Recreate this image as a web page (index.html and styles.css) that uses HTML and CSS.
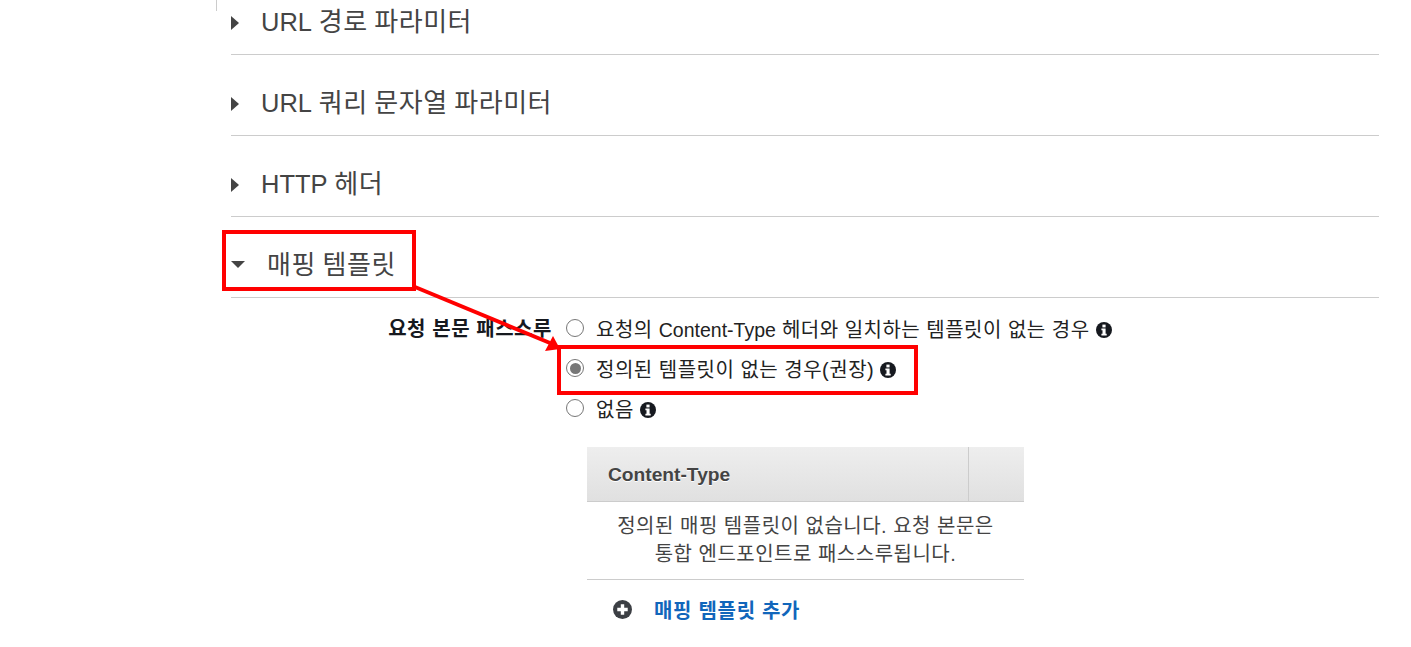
FILE: index.html
```html
<!DOCTYPE html>
<html lang="ko">
<head>
<meta charset="utf-8">
<title>매핑 템플릿</title>
<link rel="stylesheet" href="styles.css">
</head>
<body>
<div class="edge"></div>
<main class="panel">
  <section class="sec first"><span class="tri"></span><h3><span class="lat">URL</span> 경로 파라미터</h3></section>
  <section class="sec"><span class="tri"></span><h3><span class="lat">URL</span> 쿼리 문자열 파라미터</h3></section>
  <section class="sec"><span class="tri"></span><h3><span class="lat">HTTP</span> 헤더</h3></section>
  <section class="sec"><span class="tri down"></span><h3>매핑 템플릿</h3></section>
  <div class="form">
    <div class="label">요청 본문 패스스루</div>
    <div class="opts">
      <div class="opt"><span class="radio"></span><span>요청의 <span class="lat">Content-Type</span> 헤더와 일치하는 템플릿이 없는 경우</span>
        <svg class="info" viewBox="0 0 16 16"><circle cx="8" cy="8" r="8" fill="#16191f"/><rect x="6.4" y="2.6" width="3.2" height="2.8" fill="#fff"/><path d="M5.4 6.5h4.2v5.3h1.1v1.7H5.4v-1.7h1.1V8.2H5.4z" fill="#fff"/></svg></div>
      <div class="opt"><span class="radio on"></span><span>정의된 템플릿이 없는 경우(권장)</span>
        <svg class="info" viewBox="0 0 16 16"><circle cx="8" cy="8" r="8" fill="#16191f"/><rect x="6.4" y="2.6" width="3.2" height="2.8" fill="#fff"/><path d="M5.4 6.5h4.2v5.3h1.1v1.7H5.4v-1.7h1.1V8.2H5.4z" fill="#fff"/></svg></div>
      <div class="opt"><span class="radio"></span><span>없음</span>
        <svg class="info" viewBox="0 0 16 16"><circle cx="8" cy="8" r="8" fill="#16191f"/><rect x="6.4" y="2.6" width="3.2" height="2.8" fill="#fff"/><path d="M5.4 6.5h4.2v5.3h1.1v1.7H5.4v-1.7h1.1V8.2H5.4z" fill="#fff"/></svg></div>
    </div>
  </div>
  <div class="table">
    <div class="thead"><div class="th">Content-Type</div><div class="th2"></div></div>
    <div class="empty">정의된 매핑 템플릿이 없습니다. 요청 본문은<br>통합 엔드포인트로 패스스루됩니다.</div>
    <a class="add" href="#"><svg class="plus" viewBox="0 0 20 20"><circle cx="10" cy="10" r="10" fill="#3c3f44"/><path d="M8.2 4.5h3.6v3.7h3.7v3.6h-3.7v3.7H8.2v-3.7H4.5V8.2h3.7z" fill="#fff"/></svg><span>매핑 템플릿 추가</span></a>
  </div>
</main>
<div class="mark mark1"></div>
<div class="mark mark2"></div>
<svg class="arrow" width="1411" height="647" viewBox="0 0 1411 647"><path d="M415 287 L550 343" stroke="#f00" stroke-width="4" fill="none"/><path d="M560 349 L545 351 L553 336z" fill="#f00"/></svg>
</body>
</html>
```
FILE: styles.css
```css
html, body { margin: 0; padding: 0; background: #fff; }
body {
  height: 647px;
  overflow: hidden;
  position: relative;
  font-family: "Liberation Sans", "Noto Sans CJK KR", sans-serif;
  color: #444;
}
.edge { position: absolute; left: 216px; top: 0; width: 1px; height: 11px; background: #ccc; }
.panel { margin-left: 231px; width: 1148px; }
.lat { letter-spacing: 0; font-size: 97.5%; }
.sec {
  display: flex;
  align-items: center;
  box-sizing: border-box;
  height: 81px;
  padding-top: 16px;
  border-bottom: 1px solid #ccc;
}
.sec.first { height: 55px; padding-top: 0; padding-bottom: 10px; }
.sec h3 { margin: -6px 0 0 22px; font-size: 26px; font-weight: 400; letter-spacing: 0.5px; word-spacing: -1px; color: #444; }
.sec h3 .lat { font-size: 25.5px; }
.tri { width: 0; height: 0; margin-top: 2px; border-style: solid; border-width: 7.5px 0 7.5px 8px; border-color: transparent transparent transparent #444; }
.tri.down { border-width: 7px 7px 0 7px; border-color: #444 transparent transparent transparent; margin-top: -2px; }
.form { display: flex; margin-top: 10px; }
.label { width: 321px; padding-top: 1px; text-align: right; font-size: 20px; font-weight: 700; color: #16191f; line-height: 40px; height: 39px; letter-spacing: 0.55px; }
.opts { margin-left: 14px; }
.opt { display: flex; align-items: center; height: 40px; font-size: 20px; letter-spacing: 0.5px; color: #222; }
.radio { width: 16px; height: 16px; border: 1px solid #777; border-radius: 50%; margin-right: 12px; position: relative; flex: none; }
.radio.on::after { content: ""; position: absolute; left: 2.5px; top: 2.5px; width: 11px; height: 11px; border-radius: 50%; background: #777; }
.info { width: 16px; height: 16px; margin: 3px 0 0 6px; flex: none; }
.table { margin: 19px 0 0 356px; width: 437px; }
.thead { display: flex; height: 54px; background: linear-gradient(#eee, #e0e0e0); border-bottom: 1px solid #ccc; }
.th { width: 360px; padding: 1px 0 0 21px; line-height: 54px; font-size: 19.2px; font-weight: 700; color: #444; text-shadow: 0 1px 0 #fff; border-right: 1px solid #ccc; box-sizing: content-box; height: 53px; }
.th2 { flex: 1; }
.empty { padding: 10px 0 11px; text-align: center; font-size: 20px; letter-spacing: 0.5px; line-height: 28px; color: #444; border-bottom: 1px solid #ccc; }
.add { display: flex; align-items: center; padding-left: 26px; margin-top: 15px; color: #1166bb; font-size: 20px; letter-spacing: 0.7px; font-weight: 700; text-decoration: none; }
.plus { width: 19px; height: 19px; margin-right: 22px; }
.mark { position: absolute; border: 4px solid #f00; box-sizing: border-box; }
.mark1 { left: 222px; top: 230px; width: 194px; height: 61px; }
.mark2 { left: 557px; top: 345px; width: 361px; height: 50px; }
.arrow { position: absolute; left: 0; top: 0; }
```
